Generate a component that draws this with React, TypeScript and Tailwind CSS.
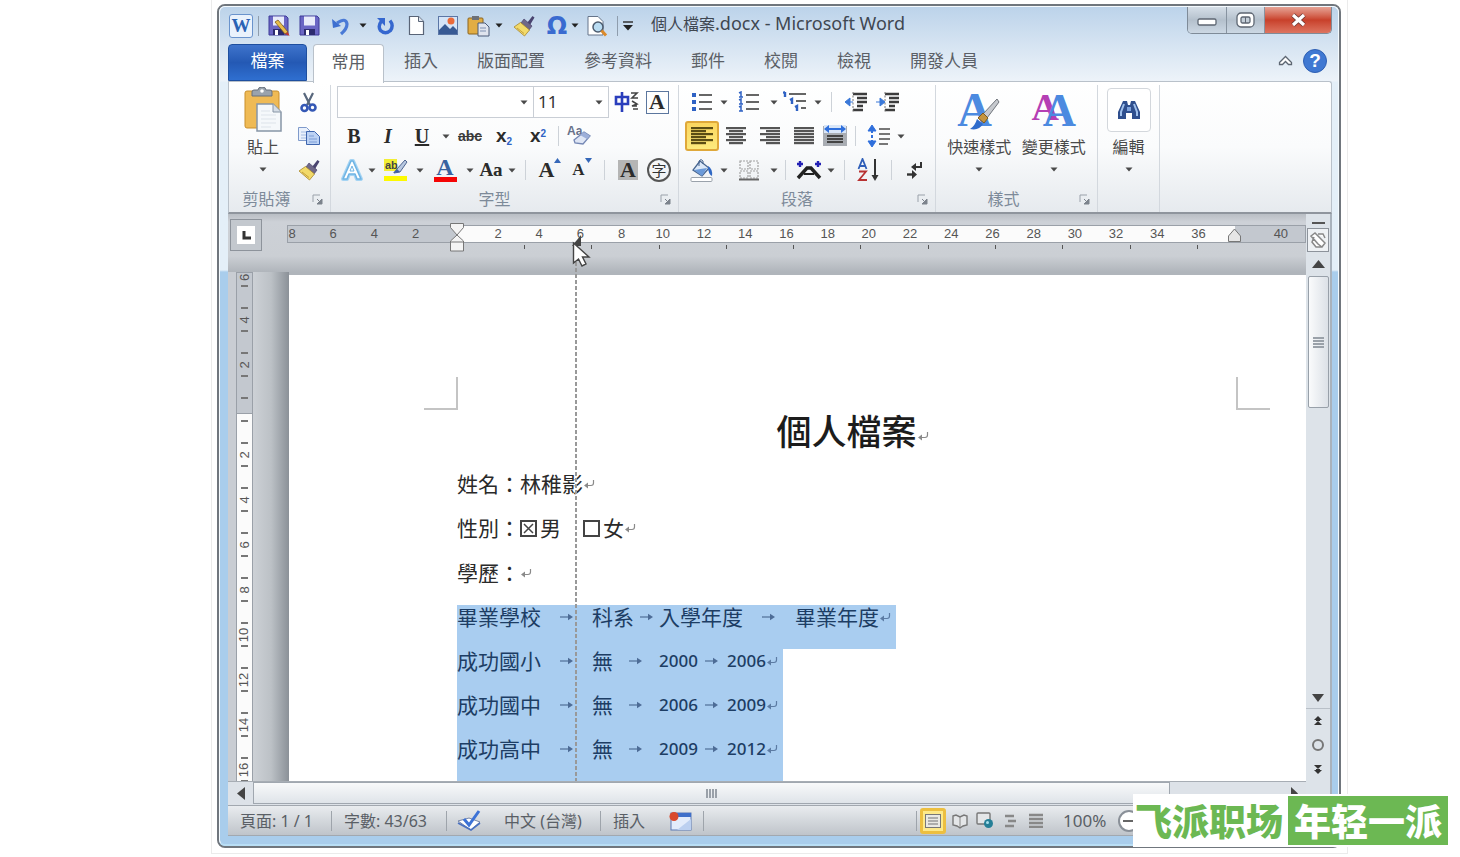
import React from "react";

type Kids = { children?: React.ReactNode };

const CJK = "font-['Noto_Sans','Noto_Sans_CJK_TC',sans-serif]";

function Caret({ color = "#4a4a4a" }: { color?: string }) {
  return (
    <svg width="8" height="5" viewBox="0 0 8 5" aria-hidden="true">
      <path d="M0.5 0.5h7L4 4.6z" fill={color} />
    </svg>
  );
}

function Tool({ label, w = "w-[34px]", className = "", children }: Kids & { label: string; w?: string; className?: string }) {
  return (
    <button type="button" aria-label={label} title={label} className={`flex h-[30px] shrink-0 items-center justify-center ${w} ${className}`}>
      {children}
    </button>
  );
}

function Drop({ label, w = "w-[10px]", color }: { label: string; w?: string; color?: string }) {
  return (
    <button type="button" aria-label={label} className={`flex h-[30px] shrink-0 items-center justify-center ${w}`}>
      <Caret color={color} />
    </button>
  );
}

function Sep({ className = "", tone = "bg-[#cdd2d8]" }: { className?: string; tone?: string }) {
  return <span className={`h-5 w-px shrink-0 ${tone} ${className}`} />;
}

function Floppy({ pen = false }: { pen?: boolean }) {
  return (
    <svg width="23" height="22" viewBox="0 0 23 22" aria-hidden="true">
      <path d="M2 1h17l2 2v17H2z" fill="#6a66c4" stroke="#3f3b98" />
      <rect x="6" y="1.5" width="11" height="9" fill="#e8ebfa" />
      <rect x="6" y="14" width="11" height="6" fill="#2c2b6e" />
      <rect x="8" y="15" width="3" height="5" fill="#fff" />
      {pen && (
        <>
          <path d="M8 7l3-2 10 12-3 2z" fill="#e8bd4a" stroke="#7a5a1c" strokeWidth=".8" />
          <path d="M18 19l3-2 1.5 4z" fill="#c0392b" />
        </>
      )}
    </svg>
  );
}

function Brush({ size = 22 }: { size?: number }) {
  return (
    <svg width={size} height={size} viewBox="0 0 22 22" aria-hidden="true">
      <path d="M14 8l5.5-7 2 1.5L17 10z" fill="#4a4470" />
      <path d="M11 4l8 7-3 4-8-7z" fill="#6f6888" stroke="#4a4470" strokeWidth=".7" />
      <path d="M7.500 7.500l9 7.500-5 6L1 12z" fill="#f2da6a" stroke="#a8862a" strokeWidth=".8" />
      <path d="M4 13l7 5.500" stroke="#c09a34" strokeWidth=".9" />
    </svg>
  );
}

function Undo() {
  return (
    <svg width="20" height="20" viewBox="0 0 20 20" aria-hidden="true">
      <path d="M6 7q9-6 10 1 0 5-6 10" fill="none" stroke="#4a7ad6" strokeWidth="3.2" />
      <path d="M1 3l1 9 8-2z" fill="#3d6fd0" />
    </svg>
  );
}

function Redo() {
  return (
    <svg width="19" height="20" viewBox="0 0 19 20" aria-hidden="true">
      <path d="M5.500 5q-4 5-1 9.500 5 4.500 10 0 3.500-5-.5-10" fill="none" stroke="#3567cf" strokeWidth="3.400" />
      <path d="M1 2h8v8z" fill="#3567cf" />
    </svg>
  );
}

function PageIcon() {
  return (
    <svg width="17" height="21" viewBox="0 0 17 21" aria-hidden="true">
      <path d="M1.500 1.500h9l5 5v13h-14z" fill="#fff" stroke="#596477" strokeWidth="1.200" />
      <path d="M10.500 1.500v5h5" fill="#dfe5ee" stroke="#596477" />
    </svg>
  );
}

function Picture() {
  return (
    <svg width="22" height="22" viewBox="0 0 22 22" aria-hidden="true">
      <rect x="1.500" y="1.500" width="19" height="18" fill="#d5e4f7" stroke="#5b76a6" />
      <path d="M2 15l6-6 5 5 3-3 4 4v4H2z" fill="#385a94" />
      <circle cx="14" cy="6" r="3.500" fill="#ea6a3a" />
    </svg>
  );
}

function PasteSmall() {
  return (
    <svg width="24" height="22" viewBox="0 0 24 22" aria-hidden="true">
      <rect x="1" y="3" width="15" height="16" rx="1" fill="#e2ad43" stroke="#8b6420" />
      <rect x="5" y="1" width="7" height="4" fill="#6c7078" />
      <path d="M11 8h7l4 4v9H11z" fill="#dfe4ee" stroke="#4b5a78" />
      <path d="M13 13h6M13 16h6" stroke="#7f91b2" />
    </svg>
  );
}

function PasteLarge() {
  return (
    <svg width="40" height="46" viewBox="0 0 40 46" aria-hidden="true">
      <rect x="2" y="4" width="34" height="37" rx="2" fill="#efba55" stroke="#c98f2c" />
      <path d="M9 9V5q0-2 2-2h4q0-3 4-3t4 3h4q2 0 2 2v4z" fill="#9aa3ad" stroke="#68717c" />
      <circle cx="19" cy="4" r="1.800" fill="#fff" />
      <path d="M14 17h16l8 8v19H14z" fill="#f5f8fb" stroke="#8795a6" strokeWidth="1.500" />
      <path d="M30 17v8h8" fill="#d5dde6" stroke="#8795a6" />
      <path d="M18 28h15M18 32h15M18 36h15M18 40h10M18 24h9" stroke="#dde3ea" />
    </svg>
  );
}

function Scissors() {
  return (
    <svg width="17" height="21" viewBox="0 0 17 21" aria-hidden="true">
      <path d="M4 1l6 12M13 1L7 13" stroke="#58677c" strokeWidth="2.200" />
      <circle cx="4.500" cy="16" r="3" fill="none" stroke="#3558b5" strokeWidth="2.600" />
      <circle cx="12.500" cy="15.500" r="3" fill="none" stroke="#3558b5" strokeWidth="2.600" />
    </svg>
  );
}

function Copy() {
  return (
    <svg width="24" height="20" viewBox="0 0 24 20" aria-hidden="true">
      <path d="M1.500 1.500h8l4 4v9h-12z" fill="#eaf1fc" stroke="#7f9acb" />
      <path d="M4 6h6M4 9h6M4 12h6" stroke="#a4bce2" />
      <path d="M9.500 5.500h8l5 5v8h-13z" fill="#bcd2f4" stroke="#3f66ae" />
      <path d="M12 10h5M12 13h8M12 16h8" stroke="#7c9dd6" />
    </svg>
  );
}

function Preview() {
  return (
    <svg width="22" height="22" viewBox="0 0 22 22" aria-hidden="true">
      <path d="M2 1.500h10l5 5v13.500H2z" fill="#fff" stroke="#66758a" />
      <circle cx="12" cy="12" r="5" fill="#b9dcf2" stroke="#4c5b6e" strokeWidth="1.500" />
      <path d="M15.500 15.500l4.500 5" stroke="#dc8a2a" strokeWidth="3" />
    </svg>
  );
}

function Lines({ rows, color = "#555" }: { rows: [number, number][]; color?: string }) {
  return (
    <svg width="22" height="20" viewBox="0 0 22 20" aria-hidden="true">
      {rows.map(([x, w], i) => (
        <rect key={i} x={x} y={1 + i * 3} width={w} height="2.200" fill={color} />
      ))}
    </svg>
  );
}

function Bullets({ numbered = false }: { numbered?: boolean }) {
  return (
    <svg width="22" height="22" viewBox="0 0 22 22" aria-hidden="true">
      {[3, 10, 17].map((y) => (
        <g key={y}>
          {numbered ? (
            <path d={`M1 ${y - 1}l2-1v5M1 ${y + 3}h4`} stroke="#2f62c4" strokeWidth="1.500" fill="none" />
          ) : (
            <rect x="1" y={y - 1} width="4" height="4" fill="#2f62c4" />
          )}
          <rect x="8" y={y} width="13" height="2" fill="#666" />
        </g>
      ))}
    </svg>
  );
}

function Multilevel() {
  return (
    <svg width="26" height="22" viewBox="0 0 26 22" aria-hidden="true">
      <path d="M2 1v5M0 2l2-1M7 9l2-1v5M12 16l2-1v5" stroke="#2f62c4" strokeWidth="2.400" fill="none" />
      <path d="M6 3h17M13 10h10M18 17h5" stroke="#666" strokeWidth="2" />
    </svg>
  );
}

function Indent({ right = false }: { right?: boolean }) {
  return (
    <svg width="24" height="22" viewBox="0 0 24 22" aria-hidden="true">
      <path d="M9 3h14M13 7h10M13 11h10M13 15h6M9 19h10" stroke="#3c3c3c" strokeWidth="2.400" />
      <path d="M9 1v20" stroke="#777" strokeDasharray="2 1.500" />
      {right ? (
        <path d="M0 11h6M4 7l5 4-5 4z" stroke="#3a78d8" fill="#3a78d8" />
      ) : (
        <path d="M9 11H4M6 7l-5 4 5 4z" stroke="#3a78d8" fill="#3a78d8" />
      )}
    </svg>
  );
}

function Distribute() {
  return (
    <svg width="24" height="22" viewBox="0 0 24 22" aria-hidden="true">
      <rect y="1" width="24" height="20" fill="#a9adb3" />
      <rect x="1" width="22" height="8" fill="#d9e6f8" />
      <path d="M2 4h20" stroke="#2f6fdc" strokeWidth="2" />
      <path d="M6 0L1 4l5 4zM18 0l5 4-5 4z" fill="#2f6fdc" />
      <path d="M4 11h16M4 14h16M4 17h16" stroke="#444" strokeWidth="2" />
    </svg>
  );
}

function LineSpacing() {
  return (
    <svg width="24" height="22" viewBox="0 0 24 22" aria-hidden="true">
      <path d="M5 0l4 6H1zM5 22l4-6H1z" fill="#2f6fdc" stroke="#2f6fdc" />
      <path d="M5 5v12" stroke="#2f6fdc" strokeWidth="2" strokeDasharray="3 2" />
      <path d="M12 4h11M12 9h11M12 14h11M12 19h9" stroke="#777" strokeWidth="2" />
    </svg>
  );
}

function Bucket() {
  return (
    <svg width="24" height="24" viewBox="0 0 24 24" aria-hidden="true">
      <path d="M10 3l9 7-7 8-9-6z" fill="#dbe8f8" stroke="#47658f" strokeWidth="1.300" />
      <path d="M4 12l13-2-5 8z" fill="#6b9ad9" />
      <path d="M9 8V3q2-3 4 0v3" fill="none" stroke="#47658f" />
      <path d="M18 8q5 3 4 10-4-2-4-10" fill="#2f68c4" />
      <rect x="1" y="19.500" width="21" height="4" rx="1" fill="#fff" stroke="#9aa2ab" />
    </svg>
  );
}

function Borders() {
  return (
    <svg width="20" height="21" viewBox="0 0 20 21" aria-hidden="true">
      <path d="M1 1h8v8H1zM11 1h8v8h-8zM1 11h8v7H1zM11 11h8v7h-8z" fill="none" stroke="#a2a2a2" strokeWidth="1.200" strokeDasharray="2 1" />
      <path d="M0 19.500h20" stroke="#666" strokeWidth="2" />
    </svg>
  );
}

function AsianLayout() {
  return (
    <svg width="26" height="20" viewBox="0 0 26 20" aria-hidden="true">
      <path d="M2 18l9-10h4l9 10" fill="none" stroke="#222" strokeWidth="3.400" />
      <path d="M8 14h10" stroke="#222" strokeWidth="2" />
      <path d="M1 4h6M4 1v6M19 4h6M22 1v6" stroke="#2320b4" strokeWidth="2.400" />
    </svg>
  );
}

function SortIcon() {
  return (
    <svg width="24" height="24" viewBox="0 0 24 24" aria-hidden="true">
      <path d="M1.500 11L5.500 1l4 10M3 8h5" fill="none" stroke="#2f5eb8" strokeWidth="1.800" />
      <path d="M2 13.500h7l-7 8.500h8" fill="none" stroke="#b83232" strokeWidth="1.800" />
      <path d="M18 1v18" stroke="#333" strokeWidth="2" />
      <path d="M14.500 17h7L18 23z" fill="#333" />
    </svg>
  );
}

function Marks() {
  return (
    <svg width="18" height="18" viewBox="0 0 18 18" aria-hidden="true">
      <path d="M15 1v5H8" fill="none" stroke="#333" strokeWidth="2" />
      <path d="M10 2L5 6l5 4zM6 9l5 4.500L6 18z" fill="#333" />
      <path d="M1 13.500h6" stroke="#333" strokeWidth="2.400" />
    </svg>
  );
}

function Eraser() {
  return (
    <svg width="25" height="24" viewBox="0 0 25 24" className="overflow-visible" aria-hidden="true">
      <text x="0" y="11" fontSize="12" fontWeight="700" fontFamily="Liberation Sans, sans-serif" fill="#67718a">Aa</text>
      <path d="M17 8l6 4-7 8-8-1-1-3z" fill="#dfe6f5" stroke="#7487b4" strokeWidth="1.300" />
      <path d="M17 8l6 4-3 3-7-4z" fill="#9dafd9" />
    </svg>
  );
}

function Highlighter() {
  return (
    <svg width="24" height="24" viewBox="0 0 24 24" aria-hidden="true">
      <rect x="0" y="1" width="13" height="12" fill="#f2ee35" />
      <text x="1" y="11" fontSize="11" fontWeight="700" fontFamily="Liberation Sans, sans-serif" fill="#444">ab</text>
      <path d="M10 15l3-4 8-9 2 2-7 10z" fill="#b8c8e0" stroke="#4f6690" />
      <path d="M9 15l4-4 3 3z" fill="#3f5fa8" />
      <rect x="0" y="18" width="23" height="5" fill="#fdf900" />
    </svg>
  );
}

const bigLetter = "font-['Liberation_Serif',serif] font-bold leading-none";

function QuickStyle() {
  return (
    <span className="relative flex h-11 w-11 items-center">
      <span className={`text-[48px] text-[#4c8ae0] ${bigLetter}`}>A</span>
      <svg width="44" height="44" viewBox="0 0 44 44" className="absolute inset-0" aria-hidden="true">
        <path d="M40 11l2 3-12 16-4-4z" fill="#c6c9ce" stroke="#70757c" />
        <path d="M26 25l5 5-4 5-6-5z" fill="#c4943e" stroke="#7d5a1c" />
        <path d="M20 31l6 5q-4 7-13 5 5-3 7-10" fill="#2f6ccc" />
      </svg>
    </span>
  );
}

function ChangeStyle() {
  return (
    <span className="flex h-11 w-11 items-start justify-center">
      <span className={`-mr-4 text-[38px] text-[#b53fb4] ${bigLetter}`}>A</span>
      <span className={`text-[46px] text-[#4c8ae0] ${bigLetter}`}>A</span>
    </span>
  );
}

function Binoculars() {
  return (
    <svg width="24" height="20" viewBox="0 0 24 20" aria-hidden="true">
      <path d="M6 1h4l1 4h2l1-4h4l5 11v7h-8v-6H9v6H1v-7z" fill="#2f4f8e" />
      <path d="M7 4l-3 8v4M17 4l3 8v4" stroke="#9fc0ec" strokeWidth="2" fill="none" />
      <path d="M10 7h4v4h-4z" fill="#7fa3dc" />
    </svg>
  );
}

function ReturnMark({ color = "#8a8a8a" }: { color?: string }) {
  return (
    <svg width="12" height="10" viewBox="0 0 12 10" className="shrink-0" aria-hidden="true">
      <path d="M10.500 1v3q0 2.500-2.500 2.500H2" fill="none" stroke={color} strokeWidth="1.200" />
      <path d="M5 3.500v6L1 6.500z" fill={color} />
    </svg>
  );
}

function TabArrow() {
  return (
    <svg width="14" height="8" viewBox="0 0 14 8" aria-hidden="true">
      <path d="M0 4h10" stroke="#5c7ba3" strokeWidth="1.400" />
      <path d="M8 .8L13 4 8 7.200z" fill="#4d6c96" />
    </svg>
  );
}

function Launcher({ label }: { label: string }) {
  return (
    <button type="button" aria-label={label} className="flex h-6 w-[26px] items-center justify-center">
      <svg width="11" height="11" viewBox="0 0 11 11" aria-hidden="true">
        <path d="M1 8V1h7" fill="none" stroke="#9aa1aa" />
        <path d="M10 5v5H5zM5 5l3 3" fill="#7c838c" stroke="#7c838c" />
      </svg>
    </button>
  );
}

function Group({ name, launcher = true, className = "", children }: Kids & { name: string; launcher?: boolean; className?: string }) {
  return (
    <section aria-label={name} className={`flex shrink-0 flex-col border-r border-[#d3d8de] ${className}`}>
      <div className="h-[102px]">{children}</div>
      {launcher && (
        <div className="flex h-6 items-center text-[16px] leading-6 text-[#7d8a99]">
          <span className="flex-1 text-center">{name}</span>
          <Launcher label={`${name}選項`} />
        </div>
      )}
    </section>
  );
}

function Row({ className = "", children }: Kids & { className?: string }) {
  return <div className={`flex h-[34px] items-center ${className}`}>{children}</div>;
}

const serif = "font-['Liberation_Serif',serif] font-bold text-[#2b2b2b]";

function TitleBar() {
  return (
    <header className="flex h-[37px] items-center">
      <Tool label="Word" w="w-[26px]">
        <span className="flex h-6 w-6 items-center justify-center rounded-[3px] border border-[#6a93cc] bg-[#eaf2fc] font-['Liberation_Serif',serif] text-[19px] font-bold leading-6 text-[#2a62b4]">W</span>
      </Tool>
      <Sep className="mx-1" tone="bg-[#8f9dad]" />
      <Tool label="另存新檔" w="w-[31px]"><Floppy pen /></Tool>
      <Tool label="儲存檔案" w="w-[31px]"><Floppy /></Tool>
      <Tool label="復原" w="w-[31px]"><Undo /></Tool>
      <Drop label="復原選項" w="w-[14px]" color="#222" />
      <Tool label="取消復原" w="w-[31px]"><Redo /></Tool>
      <Tool label="開新檔案" w="w-[31px]"><PageIcon /></Tool>
      <Tool label="圖片" w="w-[31px]"><Picture /></Tool>
      <Tool label="貼上" w="w-[31px]"><PasteSmall /></Tool>
      <Drop label="貼上選項" color="#222" />
      <Tool label="複製格式" w="w-[40px]"><Brush /></Tool>
      <Tool label="符號" w="w-[26px]">
        <span className="font-['DejaVu_Sans',sans-serif] text-[24px] font-bold leading-6 text-[#3a6bd0]">Ω</span>
      </Tool>
      <Drop label="符號選項" color="#222" />
      <Tool label="預覽列印" w="w-[34px]"><Preview /></Tool>
      <Sep className="mx-[3px]" tone="bg-[#8f9dad]" />
      <Tool label="自訂" w="w-[14px]">
        <svg width="10" height="10" viewBox="0 0 10 10" aria-hidden="true">
          <path d="M0 1h10" stroke="#333" strokeWidth="1.500" />
          <path d="M0 4h10L5 9.500z" fill="#222" />
        </svg>
      </Tool>
      <h1 className="ml-4 flex items-baseline whitespace-pre pb-1 text-[16px] leading-6 text-[#3f4751]">
        個人檔案<span className="text-[18px]">.docx - Microsoft Word</span>
      </h1>
      <div className="ml-auto flex h-[27px] self-start overflow-hidden rounded-b-[5px] border border-t-0 border-[#7f8b98]">
        <button type="button" aria-label="最小化" className="flex w-[39px] items-center justify-center border-r border-[#8793a0] bg-linear-to-b from-[#d6dfe8] via-[#b4c0cc] to-[#ccd8e4]">
          <svg width="20" height="8" viewBox="0 0 20 8" className="mt-1"><rect x="1" y="1" width="18" height="6" rx="1.500" fill="#fff" stroke="#5d6672" strokeWidth="1.300" /></svg>
        </button>
        <button type="button" aria-label="最大化" className="flex w-[38px] items-center justify-center border-r border-[#8793a0] bg-linear-to-b from-[#d6dfe8] via-[#b4c0cc] to-[#ccd8e4]">
          <svg width="19" height="16" viewBox="0 0 19 16"><rect x="1" y="1" width="17" height="14" rx="4" fill="#fff" stroke="#5d6672" strokeWidth="1.300" /><rect x="5" y="5" width="9" height="6" rx="1.500" fill="#c4ced8" stroke="#5d6672" strokeWidth="1.300" /><path d="M9.500 5v6" stroke="#5d6672" /></svg>
        </button>
        <button type="button" aria-label="關閉" className="flex w-[66px] items-center justify-center bg-linear-to-b from-[#e5a396] via-[#c8402a] to-[#dd7460]">
          <svg width="17" height="14" viewBox="0 0 17 14"><path d="M3 2l11 10M14 2L3 12" stroke="#6d3a36" strokeWidth="5" /><path d="M3 2l11 10M14 2L3 12" stroke="#fff" strokeWidth="3.200" /></svg>
        </button>
      </div>
    </header>
  );
}

const tabs = ["插入", "版面配置", "參考資料", "郵件", "校閱", "檢視", "開發人員"];

function TabBar() {
  return (
    <nav className="flex h-[37px] items-stretch text-[17px] leading-6 text-[#5b5f66]">
      <button type="button" className="w-[79px] rounded-t-[4px] border border-[#1e4f9f] bg-linear-to-b from-[#3f74cc] via-[#2459b4] to-[#2f6fd0] pb-1 text-white">檔案</button>
      <button type="button" className="relative ml-[6px] h-[39px] w-[71px] rounded-t-[4px] border border-b-0 border-[#b9c1ca] bg-white pb-1">常用</button>
      <div className="ml-5 flex items-center gap-[39px] pb-1">
        {tabs.map((t) => (
          <button type="button" key={t} className="whitespace-nowrap">{t}</button>
        ))}
      </div>
      <div className="ml-auto flex items-center gap-[10px] pb-1 pr-[5px]">
        <button type="button" aria-label="最小化功能區">
          <svg width="15" height="11" viewBox="0 0 15 11"><path d="M1.500 7.500L7.500 1.500l6 6v2h-3l-3-3-3 3h-3z" fill="#fff" stroke="#5d6672" strokeWidth="1.300" /></svg>
        </button>
        <button type="button" aria-label="說明" className="flex h-6 w-6 items-center justify-center rounded-full border border-[#2e5fb3] bg-[#3f78d2] font-['Liberation_Sans',sans-serif] text-[19px] font-bold leading-6 text-white">?</button>
      </div>
    </nav>
  );
}

function Combo({ label, value, className }: { label: string; value: string; className: string }) {
  return (
    <span className={`relative flex h-8 items-center border border-[#c9ced5] bg-white ${className}`}>
      <select aria-label={label} defaultValue={value} className="h-full w-full appearance-none pl-1 text-[17px] leading-6 text-[#333] outline-none">
        <option value={value}>{value}</option>
      </select>
      <span className="pointer-events-none absolute right-[5px]"><Caret /></span>
    </span>
  );
}

function BigButton({ label, w, children }: Kids & { label: string; w: string }) {
  return (
    <button type="button" className={`flex flex-col items-center whitespace-nowrap text-[16px] leading-6 text-[#4a4a4a] ${w}`}>
      <span className="flex h-[50px] items-center">{children}</span>
      <span>{label}</span>
      <span className="flex h-5 items-center"><Caret /></span>
    </button>
  );
}

function Ribbon() {
  return (
    <div className="flex h-[133px] rounded-tr-[3px] border border-b-2 border-[#b9c1ca] border-b-[#8f959d] bg-linear-to-b from-white via-[#fafbfc] to-[#e6eaee] pt-[3px]">
      <Group name="剪貼簿" className="w-[102px]">
        <div className="flex">
          <BigButton label="貼上" w="w-[68px]"><PasteLarge /></BigButton>
          <div className="w-[26px]">
            <Row><Tool label="剪下" w="w-[22px]"><Scissors /></Tool></Row>
            <Row><Tool label="複製" w="w-6"><Copy /></Tool></Row>
            <Row><Tool label="複製格式" w="w-6"><Brush /></Tool></Row>
          </div>
        </div>
      </Group>

      <Group name="字型" className="w-[348px] pl-[6px]">
        <Row>
          <Combo label="字型" value="" className="w-[197px]" />
          <Combo label="字型大小" value="11" className="w-[75px] border-l-0" />
          <Tool label="注音標示">
            <svg width="25" height="22" viewBox="0 0 25 22" aria-hidden="true">
              <path d="M2 6h12v7H2zM8 1v20" fill="none" stroke="#2a3ebc" strokeWidth="2.600" />
              <path d="M17 2h6l-5 5h6M18 10l5 3-5 2h5M19 18h5" fill="none" stroke="#444" strokeWidth="1.600" />
            </svg>
          </Tool>
          <Tool label="字元框線" w="w-7">
            <span className={`flex h-[23px] w-[23px] items-center justify-center border border-[#5b769e] text-[22px] leading-[22px] ${serif}`}>A</span>
          </Tool>
        </Row>
        <Row>
          <Tool label="粗體"><span className={`text-[20px] leading-6 ${serif}`}>B</span></Tool>
          <Tool label="斜體"><span className={`text-[20px] italic leading-6 ${serif}`}>I</span></Tool>
          <Tool label="底線"><span className={`text-[20px] leading-6 underline ${serif}`}>U</span></Tool>
          <Drop label="底線選項" w="w-[14px]" />
          <Tool label="刪除線"><span className="font-['Liberation_Sans',sans-serif] text-[14px] font-bold leading-6 text-[#3a3a3a] line-through">abc</span></Tool>
          <Tool label="下標"><span className="font-['Liberation_Sans',sans-serif] text-[19px] font-bold leading-6 text-[#2b2b2b]">x<sub className="text-[10px] text-[#2f62c4]">2</sub></span></Tool>
          <Tool label="上標"><span className="font-['Liberation_Sans',sans-serif] text-[19px] font-bold leading-6 text-[#2b2b2b]">x<sup className="text-[10px] text-[#2f62c4]">2</sup></span></Tool>
          <Sep className="mx-[3px]" />
          <Tool label="清除格式"><Eraser /></Tool>
        </Row>
        <Row>
          <Tool label="文字效果" w="w-[30px]">
            <svg width="24" height="24" viewBox="0 0 24 24" aria-hidden="true">
              <path d="M3 21L11 3h2l8 18h-4l-2-5H9l-2 5z" fill="none" stroke="#a5d4f3" strokeWidth="4" strokeLinejoin="round" />
              <path d="M3 21L11 3h2l8 18h-4l-2-5H9l-2 5z" fill="#fff" stroke="#6fb4e4" strokeWidth="1.600" strokeLinejoin="round" />
              <path d="M10 13l2-5 2 5z" fill="#fff" stroke="#6fb4e4" />
            </svg>
          </Tool>
          <Drop label="文字效果選項" />
          <Tool label="醒目提示" w="w-[38px]"><Highlighter /></Tool>
          <Drop label="醒目提示選項" />
          <Tool label="字型色彩" w="w-10">
            <span className="flex flex-col items-center">
              <span className="font-['Liberation_Serif',serif] text-[24px] font-bold leading-[19px] text-[#39639f]">A</span>
              <span className="h-[5px] w-[23px] bg-[#f50505]" />
            </span>
          </Tool>
          <Drop label="字型色彩選項" />
          <Tool label="大小寫" w="w-8"><span className={`text-[19px] leading-6 ${serif}`}>Aa</span></Tool>
          <Drop label="大小寫選項" />
          <Sep className="mx-[8px]" />
          <Tool label="放大字型" w="w-8">
            <span className={`flex text-[22px] leading-6 ${serif}`}>A<svg width="7" height="5" viewBox="0 0 7 5"><path d="M0 5l3.500-5L7 5z" fill="#3567b8" /></svg></span>
          </Tool>
          <Tool label="縮小字型" w="w-8">
            <span className={`flex text-[17px] leading-6 ${serif}`}>A<svg width="7" height="5" viewBox="0 0 7 5"><path d="M0 0h7L3.500 5z" fill="#3567b8" /></svg></span>
          </Tool>
          <Sep className="mx-[6px]" />
          <Tool label="字元網底" w="w-[34px]"><span className={`flex h-5 w-5 items-center justify-center bg-[#b5b5b5] text-[22px] leading-5 ${serif}`}>A</span></Tool>
          <Tool label="圍繞字元" w="w-7"><span className="flex h-6 w-6 items-center justify-center rounded-full border-2 border-[#555] text-[15px] leading-5 text-[#333]">字</span></Tool>
        </Row>
      </Group>

      <Group name="段落" className="w-[257px] pl-[6px]">
        <Row>
          <Tool label="項目符號"><Bullets /></Tool>
          <Drop label="項目符號選項" />
          <Tool label="編號" w="w-10"><Bullets numbered /></Tool>
          <Drop label="編號選項" />
          <Tool label="多層次清單" w="w-[34px]"><Multilevel /></Tool>
          <Drop label="多層次清單選項" />
          <Sep className="mx-[8px]" />
          <Tool label="減少縮排" w="w-8"><Indent /></Tool>
          <Tool label="增加縮排" w="w-8"><Indent right /></Tool>
        </Row>
        <Row>
          <Tool label="靠左對齊" className="rounded-[3px] border-2 border-[#dfa83a] bg-linear-to-b from-[#fbd65f] to-[#fdea7d]">
            <Lines color="#5c4d14" rows={[[0, 22], [0, 15], [0, 22], [0, 15], [0, 22], [0, 15]]} />
          </Tool>
          <Tool label="置中"><Lines rows={[[1, 20], [4, 14], [1, 20], [4, 14], [1, 20], [4, 14]]} /></Tool>
          <Tool label="靠右對齊"><Lines rows={[[1, 20], [7, 14], [1, 20], [7, 14], [1, 20], [7, 14]]} /></Tool>
          <Tool label="左右對齊"><Lines rows={[[1, 20], [1, 20], [1, 20], [1, 20], [1, 20], [1, 20]]} /></Tool>
          <Tool label="分散對齊" w="w-7"><Distribute /></Tool>
          <Sep className="mx-[6px]" />
          <Tool label="行距"><LineSpacing /></Tool>
          <Drop label="行距選項" />
        </Row>
        <Row>
          <Tool label="網底"><Bucket /></Tool>
          <Drop label="網底選項" />
          <Tool label="框線" w="w-10"><Borders /></Tool>
          <Drop label="框線選項" />
          <Sep className="mx-[6px]" />
          <Tool label="亞洲配置"><AsianLayout /></Tool>
          <Drop label="亞洲配置選項" />
          <Sep className="mx-[8px]" />
          <Tool label="排序" w="w-8"><SortIcon /></Tool>
          <Sep className="mx-[6px]" />
          <Tool label="顯示編輯標記"><Marks /></Tool>
        </Row>
      </Group>

      <Group name="樣式" className="w-[162px]">
        <div className="flex px-[6px]">
          <BigButton label="快速樣式" w="w-[75px]"><QuickStyle /></BigButton>
          <BigButton label="變更樣式" w="w-[75px]"><ChangeStyle /></BigButton>
        </div>
      </Group>

      <Group name="編輯" launcher={false} className="w-[62px]">
        <div className="flex justify-center">
          <BigButton label="編輯" w="w-12">
            <span className="flex h-11 w-11 items-center justify-center rounded-[4px] border border-[#d3d7dc] bg-white"><Binoculars /></span>
          </BigButton>
        </div>
      </Group>
    </div>
  );
}

const hLabels = ["8", "6", "4", "2", "", ...Array.from({ length: 18 }, (_, i) => String((i + 1) * 2)), "", "40"];

function HorizontalRuler() {
  return (
    <div className="flex h-[58px] items-start pt-[5px]">
      <button type="button" aria-label="定位點類型" className="ml-[2px] flex h-8 w-8 items-center justify-center border border-[#8d939b] bg-[#c3c8ce]">
        <span className="flex h-[18px] w-[18px] items-center justify-center bg-white">
          <svg width="9" height="9" viewBox="0 0 9 9"><path d="M2 0v7h7" fill="none" stroke="#333" strokeWidth="3" /></svg>
        </span>
      </button>
      <div className="relative ml-[25px] mt-[6px] h-[18px] flex-1 border border-[#9aa0a8] bg-[#c3c8cf]">
        <div className="absolute inset-y-0 left-[169px] right-[70px] bg-[#fbfbfb]" />
        <div className="relative mr-[14px] -ml-[6px] flex justify-between text-center font-['Liberation_Sans',sans-serif] text-[13px] leading-4 text-[#555]">
          {hLabels.map((t, i) => <span key={i} className="w-5">{t}</span>)}
        </div>
        <div className="absolute left-[236px] right-[107px] top-[19px] flex justify-between">
          {Array.from({ length: 11 }, (_, i) => <span key={i} className="h-1 w-px bg-[#555]" />)}
        </div>
        <svg className="absolute -top-1 left-[161px]" width="16" height="31" viewBox="0 0 16 31" aria-hidden="true">
          <path d="M1.500 1.500h13v4L8 13 1.500 5.500z" fill="#f4f4f4" stroke="#777" />
          <path d="M8 13l6.500 6v10h-13V19zM1.500 20h13" fill="#f4f4f4" stroke="#777" />
        </svg>
        <svg className="absolute right-[63px] top-[2px]" width="15" height="15" viewBox="0 0 15 15" aria-hidden="true">
          <path d="M7.500 1L13.500 8v5.500h-12V8z" fill="#e6e6e6" stroke="#777" />
        </svg>
      </div>
    </div>
  );
}

const vLabels = ["4", "2", "", "2", "4", "6", "8", "10", "12", "14", "16"];

function VerticalRuler() {
  return (
    <div className="relative ml-2 w-[17px] shrink-0 self-stretch overflow-hidden border-x border-t border-[#9aa0a8] bg-[#c3c8cf] font-['Liberation_Sans',sans-serif] text-[13px] text-[#555]">
      <div className="absolute inset-x-0 bottom-0 top-[140px] border-t border-[#9aa0a8] bg-[#fbfbfb]" />
      <div className="absolute inset-x-0 top-0">
        <div className="flex h-6 flex-col items-center gap-[3px]">
          <span className="-rotate-90 leading-[9px]">6</span>
          <span className="h-[2px] w-[7px] bg-[#777]" />
        </div>
        {vLabels.map((t, i) => (
          <div key={i} className="flex h-[45px] flex-col items-center justify-between py-[10px]">
            <span className="h-[2px] w-[7px] bg-[#777]" />
            <span className="-rotate-90 leading-3">{t}</span>
            <span className="h-[2px] w-[7px] bg-[#777]" />
          </div>
        ))}
      </div>
    </div>
  );
}

function TabCell({ w, children }: Kids & { w: string }) {
  return (
    <span className={`flex shrink-0 items-center ${w}`}>
      {children}
      <span className="flex flex-1 justify-center"><TabArrow /></span>
    </span>
  );
}

const schools = [
  ["成功國小", "無", "2000", "2006"],
  ["成功國中", "無", "2006", "2009"],
  ["成功高中", "無", "2009", "2012"],
];

function Box({ label, checked = false }: { label: string; checked?: boolean }) {
  return (
    <label className="flex items-center">
      <span className="relative mr-[3px] flex h-[17px] w-[17px]">
        <input type="checkbox" defaultChecked={checked} className="h-[17px] w-[17px] appearance-none border-2 border-[#444]" />
        {checked && (
          <svg className="pointer-events-none absolute inset-0" width="17" height="17" viewBox="0 0 17 17"><path d="M4 4l9 9M13 4l-9 9" stroke="#444" strokeWidth="1.500" /></svg>
        )}
      </span>
      {label}
    </label>
  );
}

function Page() {
  return (
    <article className="mt-[3px] min-w-0 flex-1 overflow-hidden bg-white pt-[102px] text-[21px] leading-[26px] text-[#2a2a2a]">
      <div className="flex justify-between pl-[135px] pr-9">
        <span className="h-[33px] w-[34px] border-b-2 border-r-2 border-[#c4c4c4]" />
        <span className="h-[33px] w-[34px] border-b-2 border-l-2 border-[#c4c4c4]" />
      </div>
      <div className="pl-[168px] pr-[70px]">
        <h2 className="flex h-[62px] justify-center text-[35px] font-medium leading-[44px] text-[#1c1c1c]">
          <span className="relative">
            個人檔案
            <span className="absolute left-full top-[21px]"><ReturnMark /></span>
          </span>
        </h2>
        <p className="flex h-11 items-center pb-[20px]">姓名：林稚影<ReturnMark /></p>
        <div className="flex h-11 items-center pb-[20px]">
          性別：<Box label="男" checked />
          <span className="w-[22px]" />
          <Box label="女" /><ReturnMark />
        </div>
        <p className="flex h-[45px] items-center pb-[20px]">學歷：<ReturnMark /></p>
        <div className="flex flex-col items-start text-[#1d3d64]">
          <p className="flex h-11 items-center bg-[#a9cdf0] pb-[20px] pr-[5px]">
            <TabCell w="w-[135px]">畢業學校</TabCell>
            <TabCell w="w-[67px]">科系</TabCell>
            <TabCell w="w-[136px]">入學年度</TabCell>
            畢業年度<ReturnMark color="#5c7ba3" />
          </p>
          {schools.map(([school, dept, from, to]) => (
            <p key={school} className="flex h-11 items-center bg-[#a9cdf0] pb-[20px] pr-[5px]">
              <TabCell w="w-[135px]">{school}</TabCell>
              <TabCell w="w-[67px]">{dept}</TabCell>
              <TabCell w="w-[68px]"><span className="text-[17px] font-medium">{from}</span></TabCell>
              <span className="text-[17px] font-medium">{to}</span><ReturnMark color="#5c7ba3" />
            </p>
          ))}
        </div>
      </div>
    </article>
  );
}

function VerticalScroll() {
  const btn = "flex w-full shrink-0 items-center justify-center";
  return (
    <div className="flex w-[26px] shrink-0 flex-col items-center border-r-2 border-[#a9b2bc] bg-[#dde3e9] pt-2">
      <span className="h-[2px] w-[13px] bg-[#555]" />
      <button type="button" aria-label="檢視尺規" className="mt-1 flex h-6 w-[22px] shrink-0 items-center justify-center border border-[#8d939b] bg-[#eef1f4]">
        <svg width="18" height="18" viewBox="0 0 18 18"><path d="M2 5l4-3 10 10-3 4-4-3zM5 6l-2 5 4 5h6M9 3h5l2 4" fill="#fff" stroke="#888" strokeWidth="1.500" /></svg>
      </button>
      <button type="button" aria-label="向上捲動" className={`${btn} h-6`}>
        <svg width="13" height="8" viewBox="0 0 13 8"><path d="M0 8l6.500-8L13 8z" fill="#444" /></svg>
      </button>
      <div className="flex h-[132px] w-[21px] shrink-0 flex-col items-center justify-center gap-px rounded-[2px] border border-[#98a0a9] bg-linear-to-r from-[#fafbfc] to-[#dce1e7]">
        {[0, 1, 2, 3].map((i) => <span key={i} className="h-[2px] w-[11px] bg-[#9aa1a9]" />)}
      </div>
      <div className="flex-1" />
      <button type="button" aria-label="向下捲動" className={`${btn} h-[21px] border-b border-[#b9c0c8]`}>
        <svg width="12" height="8" viewBox="0 0 12 8"><path d="M0 0h12L6 8z" fill="#444" /></svg>
      </button>
      <button type="button" aria-label="上一頁" className={`${btn} h-6`}>
        <svg width="8" height="10" viewBox="0 0 8 10"><path d="M4 0l4 4H0zM4 5l4 4H0zM2 4h4v1H2z" fill="#333" /></svg>
      </button>
      <button type="button" aria-label="選取瀏覽物件" className={`${btn} h-6`}>
        <span className="h-3 w-3 rounded-full border-2 border-[#777]" />
      </button>
      <button type="button" aria-label="下一頁" className={`${btn} mb-6 h-6`}>
        <svg width="8" height="10" viewBox="0 0 8 10"><path d="M4 10l4-4H0zM4 5l4-4H0zM2 5h4v1H2z" fill="#333" /></svg>
      </button>
    </div>
  );
}

function Workspace() {
  return (
    <main className="flex">
      <div className="relative min-w-0 flex-1">
        <div className="bg-[linear-gradient(to_bottom,#b9bec4_0px,#cdd1d7_8px,#cbcfd4_42px,#b0b5bb_58px)]"><HorizontalRuler /></div>
        <div className="flex bg-[#b0b5bb]">
          <div className="flex bg-[#c9cdd3]"><VerticalRuler /></div>
          <div className="w-9 shrink-0 bg-linear-to-r from-[#cdd1d6] via-[#bcc1c6] to-[#8b9198]" />
          <Page />
        </div>
        <div className="flex h-6 border-t border-[#a7adb4] bg-[#dde2e8]">
          <button type="button" aria-label="向左捲動" className="flex w-[25px] items-center justify-center">
            <svg width="8" height="13" viewBox="0 0 8 13"><path d="M8 0v13L0 6.500z" fill="#444" /></svg>
          </button>
          <div className="flex h-[22px] flex-1 items-center justify-center gap-px border border-[#a0a7af] bg-linear-to-b from-[#f8f9fa] to-[#dfe4e9]">
            {[0, 1, 2, 3].map((i) => <span key={i} className="h-[9px] w-[2px] bg-[#9aa1a9]" />)}
          </div>
          <button type="button" aria-label="向右捲動" className="flex w-[136px] items-center justify-end pr-2">
            <svg width="7" height="13" viewBox="0 0 7 13"><path d="M0 0v13l7-6.500z" fill="#444" /></svg>
          </button>
        </div>
        <div className="pointer-events-none absolute bottom-6 left-[347px] top-[30px] w-[2px] bg-[repeating-linear-gradient(to_bottom,#999_0px,#999_4px,transparent_4px,transparent_6px)]" />
        <svg className="pointer-events-none absolute left-[344px] top-[20px]" width="22" height="34" viewBox="0 0 22 34" aria-hidden="true">
          <path d="M0 12L9 1v11z" fill="#444" />
          <path d="M1.500 9v20l5-4 3.500 7 4-2-3.500-7h6.500z" fill="#fff" stroke="#444" strokeWidth="1.400" />
        </svg>
      </div>
      <VerticalScroll />
    </main>
  );
}

function StatusBar() {
  return (
    <footer className="flex h-[31px] items-center border-b border-t border-[#a2a8af] bg-linear-to-b from-[#e9ecef] to-[#bfc4ca] text-[16px] leading-6 text-[#5a5f66]">
      <span className="w-[103px] whitespace-nowrap pl-3">頁面: 1 / 1</span>
      <Sep tone="bg-[#9ea4ab]" />
      <span className="w-[114px] whitespace-nowrap pl-3">字數: 43/63</span>
      <Sep tone="bg-[#9ea4ab]" />
      <button type="button" aria-label="校對" className="flex w-[45px] justify-center">
        <svg width="25" height="22" viewBox="0 0 25 22"><path d="M1 11l11-3 11 4-9 8z" fill="#fff" stroke="#7585a8" /><path d="M1 13l13 7 9-7" fill="none" stroke="#4a71c0" strokeWidth="1.600" /><path d="M7 9l5 6L22 1" fill="none" stroke="#3c72d6" strokeWidth="3" /></svg>
      </button>
      <button type="button" className="w-[108px] whitespace-nowrap pl-3 text-left">中文 (台灣)</button>
      <Sep tone="bg-[#9ea4ab]" />
      <button type="button" className="w-[56px] pl-3 text-left">插入</button>
      <button type="button" aria-label="巨集" className="flex w-[46px] justify-center">
        <svg width="23" height="20" viewBox="0 0 23 20"><rect x="2" y="2" width="20" height="17" fill="#e3ecfb" stroke="#5a78b4" /><rect x="2" y="2" width="20" height="4" fill="#3f6fca" /><path d="M22 8v11H8z" fill="#bcd0f0" /><circle cx="5" cy="5.500" r="4.500" fill="#d9482c" /></svg>
      </button>
      <Sep tone="bg-[#9ea4ab]" />
      <div className="ml-auto flex items-center pr-[192px]">
        <Sep className="mr-[3px]" tone="bg-[#9ea4ab]" />
        <button type="button" aria-label="整頁模式" className="flex h-[26px] w-[26px] items-center justify-center rounded-[3px] border-[3px] border-[#ecbf40] bg-[#fde98a]">
          <svg width="16" height="14" viewBox="0 0 16 14"><rect x=".5" y=".5" width="15" height="13" fill="#e9e9e4" stroke="#777" /><path d="M3 4h10M3 7h10M3 10h10" stroke="#999" strokeWidth="1.500" /></svg>
        </button>
        <button type="button" aria-label="閱讀版面" className="flex w-[27px] justify-center">
          <svg width="16" height="16" viewBox="0 0 16 16"><path d="M1 3l3-1 4 2 4-2 3 1v9l-4 1-3 2-3-2-4-1z" fill="#e4e6e8" stroke="#777" strokeWidth="1.400" /><path d="M8 4v10" stroke="#888" /></svg>
        </button>
        <button type="button" aria-label="Web 版面" className="flex w-6 justify-center">
          <svg width="18" height="17" viewBox="0 0 18 17"><rect x="1" y="1" width="13" height="11" rx="1" fill="#e4e6e8" stroke="#777" strokeWidth="1.400" /><circle cx="12.500" cy="11.500" r="4.500" fill="#257f97" /><circle cx="11.500" cy="10.500" r="1.500" fill="#a8dfec" /></svg>
        </button>
        <button type="button" aria-label="大綱模式" className="flex w-[26px] justify-center">
          <svg width="13" height="15" viewBox="0 0 13 15"><path d="M1 3h9M4 8h8M1 13h9" stroke="#888" strokeWidth="2.400" /></svg>
        </button>
        <button type="button" aria-label="草稿" className="flex w-[26px] justify-center">
          <svg width="14" height="15" viewBox="0 0 14 15"><path d="M0 2h14M0 6h14M0 10h14M0 14h14" stroke="#888" strokeWidth="2.400" /></svg>
        </button>
        <button type="button" className="ml-[14px] w-[50px] text-left text-[17px]">100%</button>
        <button type="button" aria-label="縮小" className="ml-[5px] flex h-[22px] w-[22px] items-center justify-center rounded-full border-2 border-[#8a9098] bg-white">
          <span className="h-[2px] w-3 bg-[#666]" />
        </button>
      </div>
    </footer>
  );
}

export default function App() {
  return (
    <div lang="zh-Hant" className={`relative min-h-screen bg-white pl-[211px] pr-[112px] ${CJK}`}>
      <div className="border-x border-b border-[#ebebeb] pb-[5px] pl-[5px] pr-[6px] pt-1">
        <div className="rounded-[8px] border-2 border-[#70767d] bg-linear-to-b from-[#e4eff8] from-[264px] to-[#a9cdec] to-[266px]">
          <div className="rounded-[6px] border border-b-2 border-[#f4fafe] border-b-[#b9def5] bg-[linear-gradient(to_bottom,#bcd3ea_0px,#d3e2f1_34px,#edf3f9_74px,transparent_75px)] pb-2 pl-2 pr-[6px]">
            <TitleBar />
            <TabBar />
            <Ribbon />
            <Workspace />
            <StatusBar />
          </div>
        </div>
      </div>
      <aside lang="zh-Hans" className="absolute bottom-[10px] right-[9px] flex bg-white py-[2px] pl-[2px] pr-[3px] font-['Noto_Sans_CJK_SC',sans-serif] text-[37px] font-black leading-[49px]">
        <span className="pr-[5px] text-[#6cb853]">飞派职场</span>
        <span className="bg-[#6cb853] px-[6px] text-white">年轻一派</span>
      </aside>
    </div>
  );
}
